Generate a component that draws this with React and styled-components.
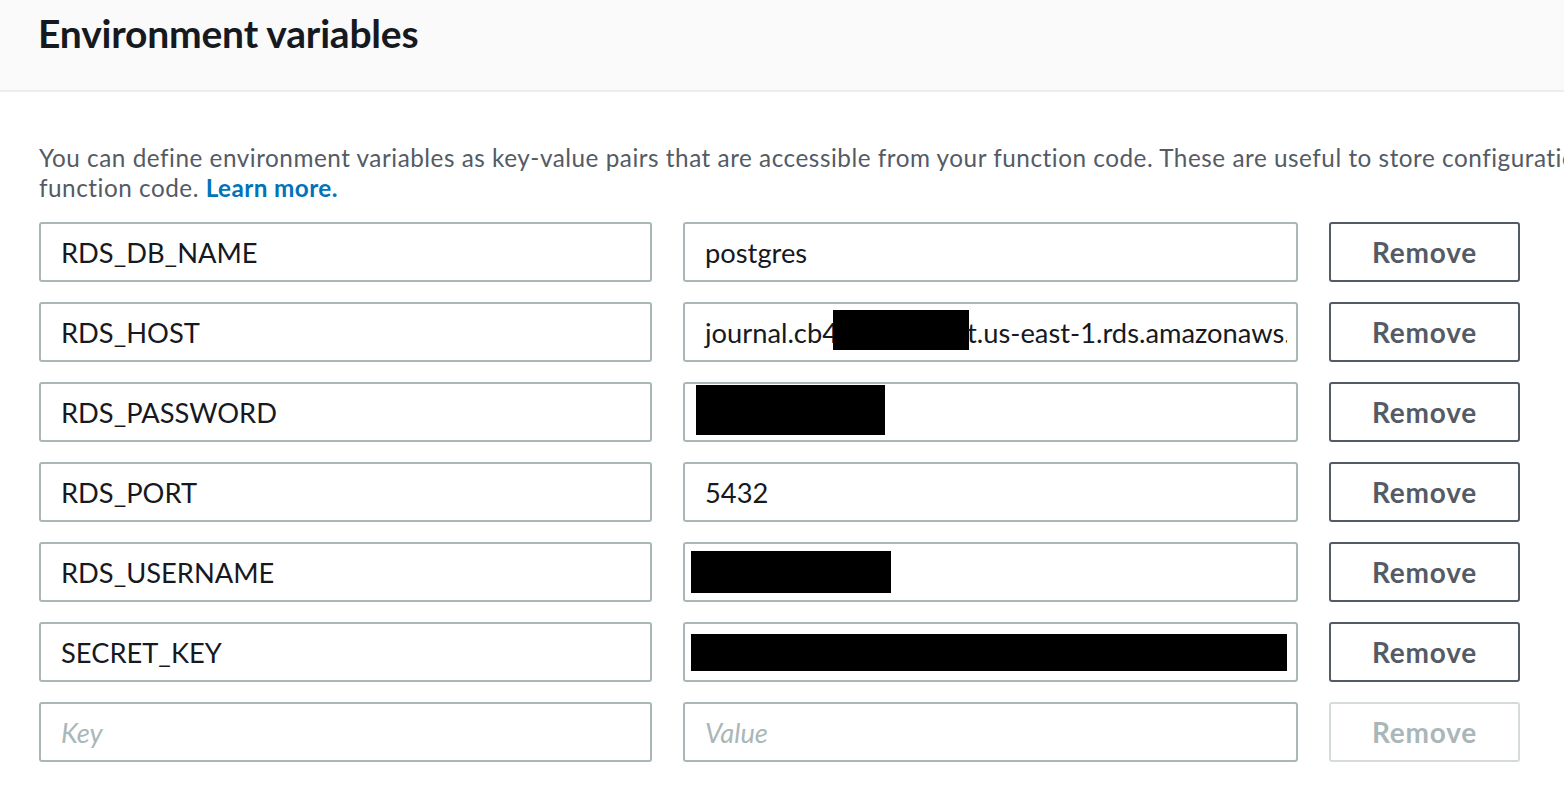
import React from "react";
import styled, { createGlobalStyle } from "styled-components";

const GlobalStyle = createGlobalStyle`
  html, body { margin: 0; padding: 0; background: #ffffff; }
  body { font-family: Lato, "Noto Sans", sans-serif; color: #16191f; overflow: hidden; }
`;

const Page = styled.div`
  width: 1564px;
  height: 788px;
  overflow: hidden;
`;

const Header = styled.header`
  height: 90px;
  background: #fafafa;
  border-bottom: 2px solid #eaeded;
  padding: 0 39px;
  display: flex;
  align-items: center;
  box-sizing: content-box;
`;

const Title = styled.h2`
  margin: 0 0 25px -1px;
  font-size: 39px;
  font-weight: 700;
  color: #16191f;
  letter-spacing: -0.2px;
`;

const Body = styled.div`
  padding: 51px 0 0 39px;
`;

const Description = styled.p`
  margin: 0 0 19px 0;
  font-size: 24.3px;
  line-height: 30px;
  letter-spacing: 0.52px;
  color: #545b64;
  white-space: nowrap;
`;

const Link = styled.a`
  color: #0073bb;
  font-weight: 700;
  letter-spacing: 0.4px;
  text-decoration: none;
`;

const Rows = styled.div`
  display: grid;
  grid-template-columns: 613px 615px 191px;
  column-gap: 31px;
  row-gap: 20px;
`;

const Field = styled.div`
  box-sizing: border-box;
  height: 60px;
  border: 2px solid #aab7b8;
  border-radius: 3px;
  padding: 0 9px 0 6px;
  display: flex;
  align-items: stretch;
  font-size: 27.3px;
  color: ${(p) => (p.$placeholder ? "#aab7b8" : "#16191f")};
  font-style: ${(p) => (p.$placeholder ? "italic" : "normal")};
`;

const FieldContent = styled.div`
  flex: 1;
  min-width: 0;
  padding-left: 14px;
  display: flex;
  align-items: center;
  overflow: hidden;
  white-space: nowrap;
`;

const Redact = styled.span`
  display: inline-block;
  flex: none;
  background: #000;
  width: ${(p) => p.$w}px;
  height: ${(p) => p.$h}px;
  margin-left: ${(p) => p.$ml || 0}px;
  margin-right: ${(p) => p.$mr || 0}px;
  margin-top: ${(p) => p.$mt || 0}px;
`;

const RemoveButton = styled.button`
  box-sizing: border-box;
  height: 60px;
  border: 2px solid ${(p) => (p.disabled ? "#d5dbdb" : "#545b64")};
  border-radius: 3px;
  background: #ffffff;
  color: ${(p) => (p.disabled ? "#aab7b8" : "#545b64")};
  font-family: Lato, "Noto Sans", sans-serif;
  font-size: 28px;
  font-weight: 700;
  letter-spacing: 0.8px;
  padding: 0;
  cursor: pointer;
`;

const rows = [
  { key: "RDS_DB_NAME", value: <span>postgres</span> },
  {
    key: "RDS_HOST",
    value: (
      <>
        <span>journal.cb4</span>
        <Redact $w={136} $h={40} $ml={-5} $mr={-2} $mt={-4} />
        <span>t.us-east-1.rds.amazonaws.com</span>
      </>
    ),
  },
  { key: "RDS_PASSWORD", value: <Redact $w={189} $h={50} $ml={-9} $mt={-4} /> },
  { key: "RDS_PORT", value: <span>5432</span> },
  { key: "RDS_USERNAME", value: <Redact $w={200} $h={42} $ml={-14} /> },
  { key: "SECRET_KEY", value: <Redact $w={596} $h={37} $ml={-14} $mt={1} /> },
];

export default function App() {
  return (
    <Page>
      <GlobalStyle />
      <Header>
        <Title>Environment variables</Title>
      </Header>
      <Body>
        <Description>
          You can define environment variables as key-value pairs that are accessible from your function code. These are useful to store configuration settings without the need to change
          <br />
          function code. <Link href="#">Learn more.</Link>
        </Description>
        <Rows>
          {rows.map((r) => (
            <React.Fragment key={r.key}>
              <Field>
                <FieldContent>{r.key}</FieldContent>
              </Field>
              <Field>
                <FieldContent>{r.value}</FieldContent>
              </Field>
              <RemoveButton>Remove</RemoveButton>
            </React.Fragment>
          ))}
          <Field $placeholder>
            <FieldContent>Key</FieldContent>
          </Field>
          <Field $placeholder>
            <FieldContent>Value</FieldContent>
          </Field>
          <RemoveButton disabled>Remove</RemoveButton>
        </Rows>
      </Body>
    </Page>
  );
}
